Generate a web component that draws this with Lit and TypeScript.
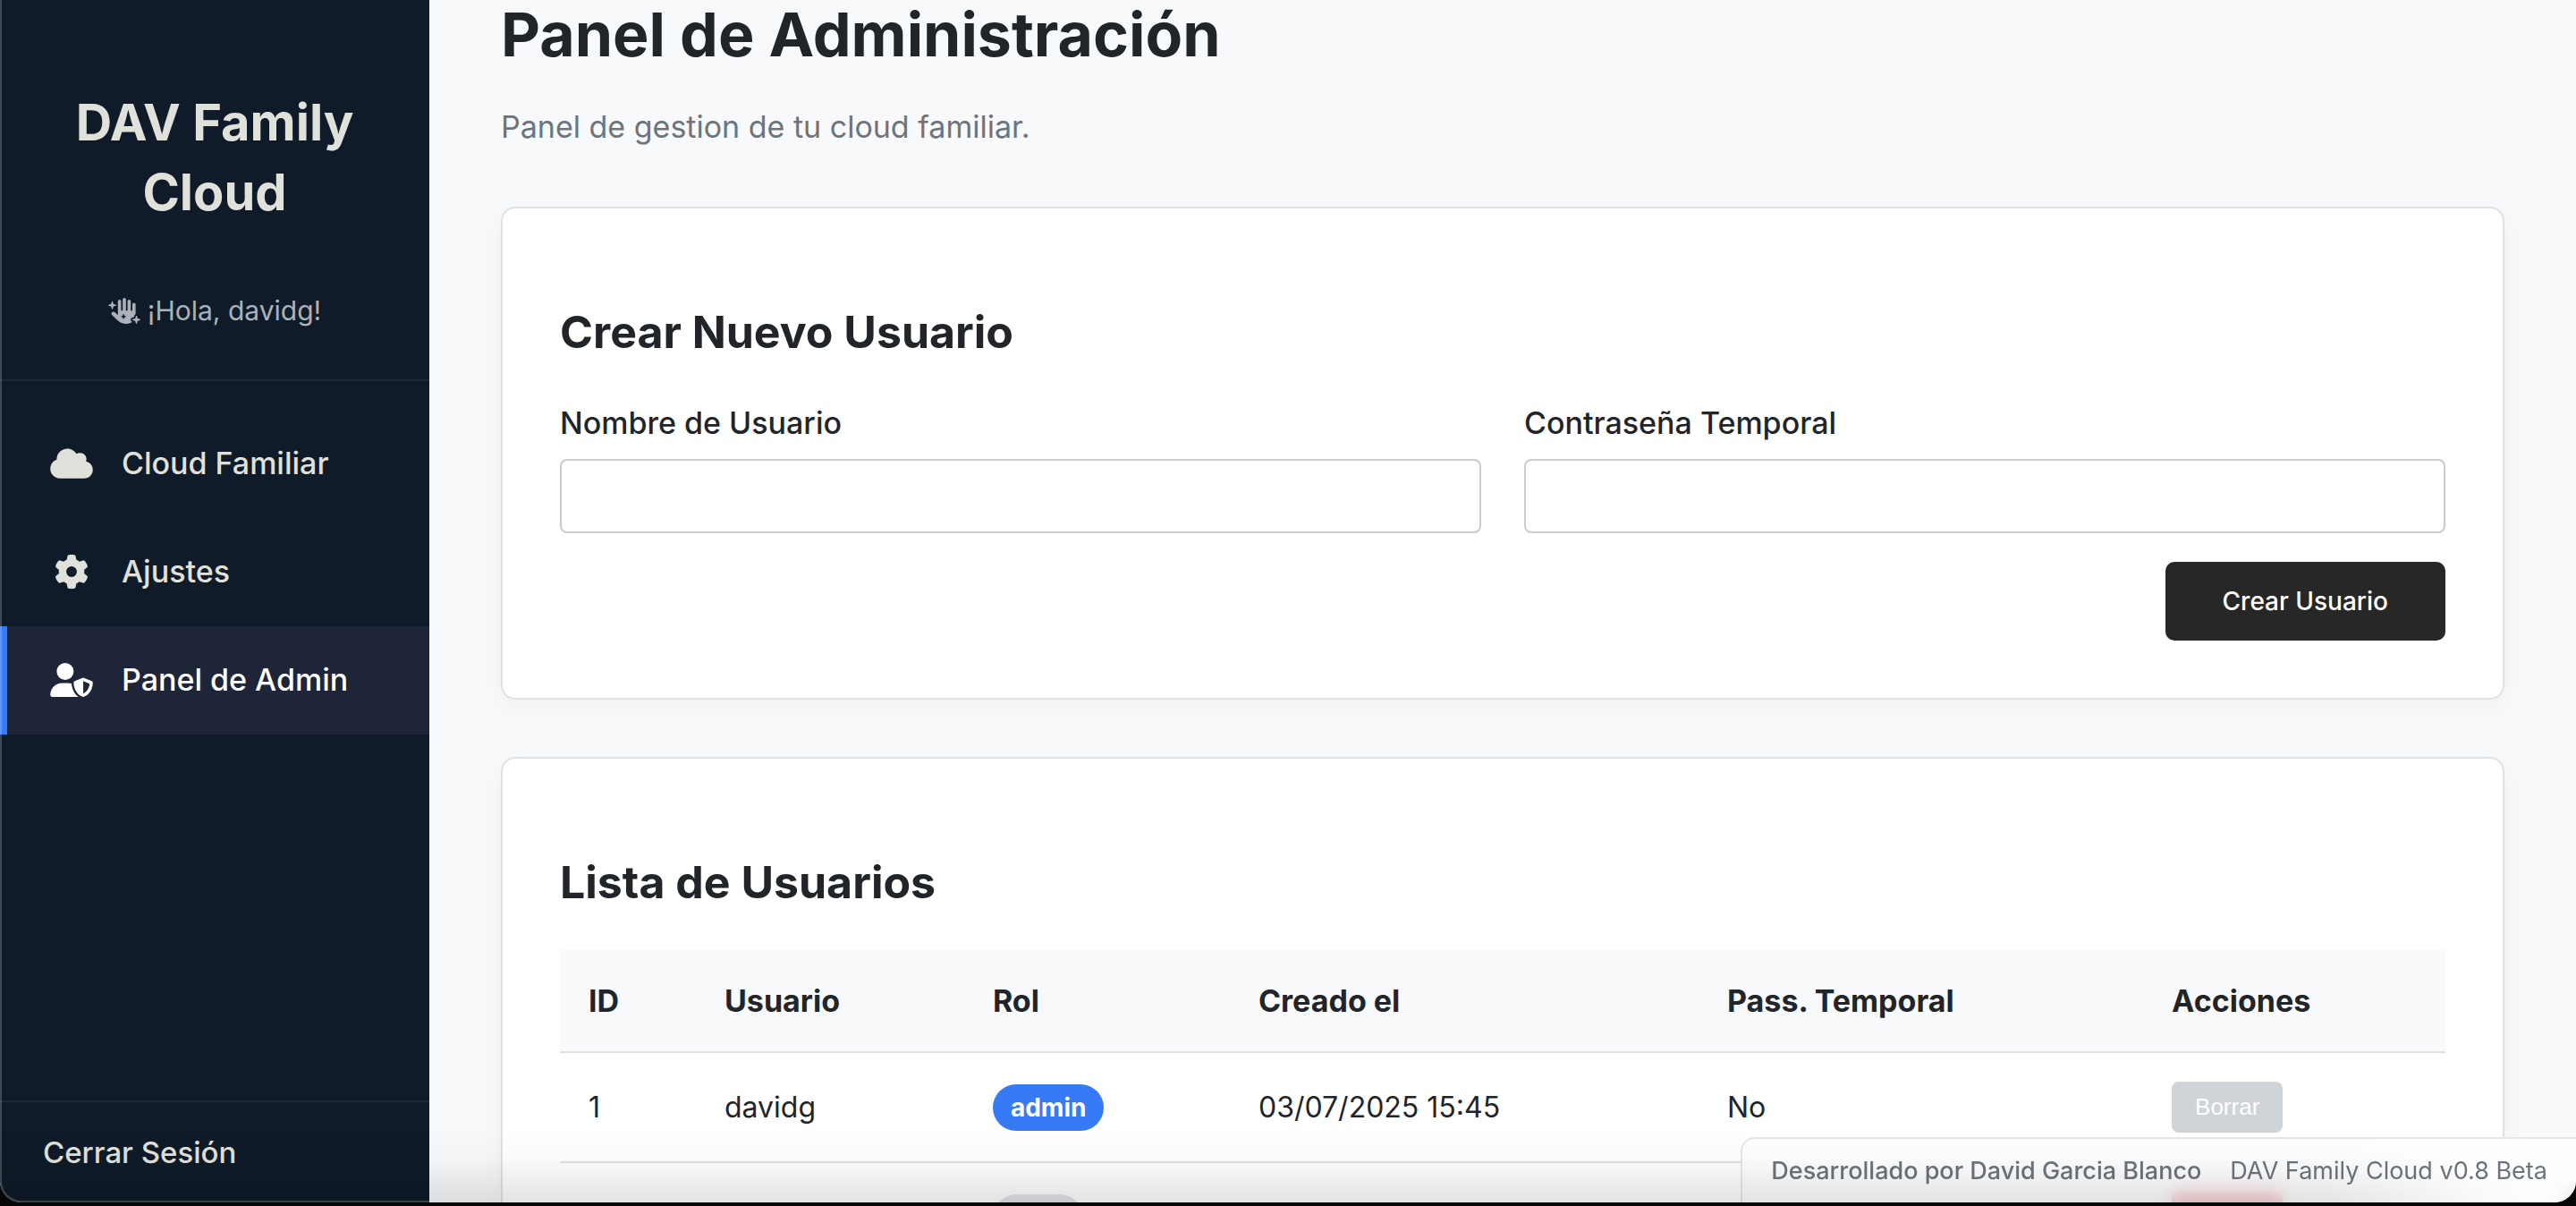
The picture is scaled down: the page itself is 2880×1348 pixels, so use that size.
import { LitElement, html, css, svg } from "lit";
import { customElement, property, state } from "lit/decorators.js";
import { classMap } from "lit/directives/class-map.js";

interface IconShape {
  box: string;
  d: string;
}

const ICONS: Record<string, IconShape> = {
  cloud: {
    box: "0 0 640 512",
    d: "M0 336c0 79.5 64.5 144 144 144H512c70.7 0 128-57.3 128-128c0-61.9-44-113.6-102.4-125.4c4.1-10.7 6.4-22.4 6.4-34.6c0-53-43-96-96-96c-19.7 0-38.1 6-53.3 16.2C367 64.2 315.3 32 256 32C167.6 32 96 103.6 96 192c0 2.7 .1 5.4 .2 8.1C40.2 219.8 0 273.2 0 336z",
  },
  gear: {
    box: "0 0 512 512",
    d: "M495.9 166.6c3.2 8.7 .5 18.4-6.4 24.6l-43.3 39.4c1.1 8.3 1.7 16.8 1.7 25.4s-.6 17.1-1.7 25.4l43.3 39.4c6.9 6.2 9.6 15.9 6.4 24.6c-4.4 11.9-9.7 23.3-15.8 34.3l-4.7 8.1c-6.6 11-14 21.4-22.1 31.2c-5.9 7.2-15.7 9.6-24.5 6.8l-55.7-17.7c-13.4 10.3-28.2 18.9-44 25.4l-12.5 57.1c-2 9.1-9 16.3-18.2 17.8c-13.8 2.3-28 3.5-42.5 3.5s-28.7-1.2-42.5-3.5c-9.2-1.5-16.2-8.7-18.2-17.8l-12.5-57.1c-15.8-6.5-30.6-15.1-44-25.4L83.1 425.9c-8.8 2.8-18.6 .3-24.5-6.8c-8.1-9.8-15.5-20.2-22.1-31.2l-4.7-8.1c-6.1-11-11.4-22.4-15.8-34.3c-3.2-8.7-.5-18.4 6.4-24.6l43.3-39.4C64.6 273.1 64 264.6 64 256s.6-17.1 1.7-25.4L22.4 191.2c-6.9-6.2-9.6-15.9-6.4-24.6c4.4-11.9 9.7-23.3 15.8-34.3l4.7-8.1c6.6-11 14-21.4 22.1-31.2c5.9-7.2 15.7-9.6 24.5-6.8l55.7 17.7c13.4-10.3 28.2-18.9 44-25.4l12.5-57.1c2-9.1 9-16.3 18.2-17.8C227.3 1.2 241.5 0 256 0s28.7 1.2 42.5 3.5c9.2 1.5 16.2 8.7 18.2 17.8l12.5 57.1c15.8 6.5 30.6 15.1 44 25.4l55.7-17.7c8.8-2.8 18.6-.3 24.5 6.8c8.1 9.8 15.5 20.2 22.1 31.2l4.7 8.1c6.1 11 11.4 22.4 15.8 34.3zM256 336a80 80 0 1 0 0-160 80 80 0 1 0 0 160z",
  },
  shield: {
    box: "0 0 640 512",
    d: "M224 256A128 128 0 1 0 224 0a128 128 0 1 0 0 256zm-45.7 48C79.8 304 0 383.8 0 482.3C0 498.7 13.3 512 29.7 512H418.3c1.8 0 3.5-.2 5.3-.5c-76.3-55.1-99.8-141-103.1-200.2c-16.1-4.8-33.1-7.3-50.7-7.3H178.3zm308.8-78.3l-120 48C358 277.4 352 286.2 352 296c0 63.3 25.9 168.8 134.8 214.2c5.9 2.5 12.6 2.5 18.5 0C614.1 464.8 640 359.3 640 296c0-9.8-6-18.6-15.1-22.3l-120-48c-5.7-2.3-12.1-2.3-17.8 0zM591.4 312c-3.9 50.7-27.2 116.7-95.4 149.7V273.8L591.4 312z",
  },
  hand: {
    box: "0 0 640 512",
    d: "M320 0c17.7 0 32 14.3 32 32V240c0 8.8 7.2 16 16 16s16-7.2 16-16V64c0-17.7 14.3-32 32-32s32 14.3 32 32V240c0 8.8 7.2 16 16 16s16-7.2 16-16V128c0-17.7 14.3-32 32-32s32 14.3 32 32V323.1c-11.9 4.8-21.3 14.9-25 27.8l-8.9 31.2L478.9 391C460.6 396.3 448 413 448 432c0 18.9 12.5 35.6 30.6 40.9C448.4 497.4 409.9 512 368 512H348.8c-59.6 0-116.9-22.9-160-64L76.4 341c-16-15.2-16.6-40.6-1.4-56.6s40.6-16.6 56.6-1.4l60.5 57.6c0-1.5-.1-3.1-.1-4.6V64c0-17.7 14.3-32 32-32s32 14.3 32 32V240c0 8.8 7.2 16 16 16s16-7.2 16-16V32c0-17.7 14.3-32 32-32zm-7.3 326.6c-1.1-3.9-4.7-6.6-8.7-6.6s-7.6 2.7-8.7 6.6L288 352l-25.4 7.3c-3.9 1.1-6.6 4.7-6.6 8.7s2.7 7.6 6.6 8.7L288 384l7.3 25.4c1.1 3.9 4.7 6.6 8.7 6.6s7.6-2.7 8.7-6.6L320 384l25.4-7.3c3.9-1.1 6.6-4.7 6.6-8.7s-2.7-7.6-6.6-8.7L320 352l-7.3-25.4zM104 120l48.3 13.8c4.6 1.3 7.7 5.5 7.7 10.2s-3.1 8.9-7.7 10.2L104 168 90.2 216.3c-1.3 4.6-5.5 7.7-10.2 7.7s-8.9-3.1-10.2-7.7L56 168 7.7 154.2C3.1 152.9 0 148.7 0 144s3.1-8.9 7.7-10.2L56 120 69.8 71.7C71.1 67.1 75.3 64 80 64s8.9 3.1 10.2 7.7L104 120zM584 408l48.3 13.8c4.6 1.3 7.7 5.5 7.7 10.2s-3.1 8.9-7.7 10.2L584 456l-13.8 48.3c-1.3 4.6-5.5 7.7-10.2 7.7s-8.9-3.1-10.2-7.7L536 456l-48.3-13.8c-4.6-1.3-7.7-5.5-7.7-10.2s3.1-8.9 7.7-10.2L536 408l13.8-48.3c1.3-4.6 5.5-7.7 10.2-7.7s8.9 3.1 10.2 7.7L584 408z",
  },
};

@customElement("app-icon")
class AppIcon extends LitElement {
  @property() name = "cloud";

  static styles = css`
    :host {
      display: inline-flex;
      flex: none;
    }
    .glyph {
      display: block;
      width: 100%;
      height: 100%;
      fill: currentColor;
    }
  `;

  render() {
    const icon = ICONS[this.name];
    return html`<svg class="glyph" viewBox=${icon.box} aria-hidden="true">
      ${svg`<path d=${icon.d} />`}
    </svg>`;
  }
}

@customElement("side-bar")
class SideBar extends LitElement {
  @state() private current = "admin";

  private links = [
    { id: "cloud", icon: "cloud", label: "Cloud Familiar" },
    { id: "settings", icon: "gear", label: "Ajustes" },
    { id: "admin", icon: "shield", label: "Panel de Admin" },
  ];

  static styles = css`
    :host {
      position: relative;
      display: flex;
      flex-direction: column;
      box-sizing: border-box;
      background: #0f1b28;
      color: #e1e1dc;
    }
    /* thin light rim along the outer edge of the window */
    :host::after {
      content: "";
      position: absolute;
      inset: 0;
      border-left: 2px solid rgba(255, 255, 255, 0.2);
      border-bottom: 2px solid rgba(255, 255, 255, 0.2);
      border-bottom-left-radius: 24px;
      pointer-events: none;
    }
    .head {
      padding: 98px 32px 53px;
      border-bottom: 2px solid #1c2838;
      text-align: center;
    }
    .brand {
      margin: 0 0 69px;
      font-size: 56px;
      line-height: 78px;
      font-weight: 700;
    }
    .hello {
      display: flex;
      align-items: center;
      justify-content: center;
      gap: 8px;
      margin: 0;
      font-size: 30px;
      line-height: 48px;
      color: #abb2b9;
    }
    .hello-icon {
      width: 36px;
      height: 29px;
    }
    .nav {
      flex: 1;
      padding-top: 32px;
    }
    .link {
      display: flex;
      align-items: center;
      gap: 32px;
      padding: 31px 32px 33px 48px;
      border-left: 8px solid transparent;
      font-size: 34px;
      line-height: 57px;
      font-weight: 500;
      color: inherit;
      text-decoration: none;
    }
    .link.active {
      border-left-color: #377af6;
      background: #1e2538;
      color: #fff;
    }
    .link-icon {
      width: 48px;
      height: 38px;
    }
    .foot {
      border-top: 2px solid #1c2838;
    }
    .logout {
      display: block;
      padding: 32px 48px;
      font-size: 33px;
      line-height: 48px;
      font-weight: 500;
      color: inherit;
      text-decoration: none;
    }
  `;

  render() {
    return html`
      <header class="head">
        <h2 class="brand">DAV Family Cloud</h2>
        <p class="hello">
          <app-icon class="hello-icon" name="hand"></app-icon>
          <span>¡Hola, davidg!</span>
        </p>
      </header>
      <nav class="nav">
        ${this.links.map(
          (l) => html`<a
            href="#${l.id}"
            class=${classMap({ link: true, active: l.id === this.current })}
            @click=${() => (this.current = l.id)}
          >
            <app-icon class="link-icon" name=${l.icon}></app-icon>
            <span>${l.label}</span>
          </a>`
        )}
      </nav>
      <div class="foot"><a class="logout" href="#logout">Cerrar Sesión</a></div>
    `;
  }
}

@customElement("create-user-form")
class CreateUserForm extends LitElement {
  static styles = css`
    :host {
      display: block;
    }
    .form {
      display: grid;
      grid-template-columns: 1fr 1fr;
      column-gap: 48px;
      row-gap: 32px;
    }
    .field {
      display: flex;
      flex-direction: column;
      gap: 16px;
    }
    .label {
      font-size: 34px;
      line-height: 49px;
      font-weight: 500;
    }
    .input {
      box-sizing: border-box;
      width: 100%;
      height: 83px;
      padding: 0 24px;
      border: 2px solid #ccc;
      border-radius: 8px;
      background: #fff;
      font: inherit;
      font-size: 32px;
      color: inherit;
    }
    .submit {
      grid-column: 1 / -1;
      justify-self: end;
      height: 88px;
      padding: 0 64px;
      border: 0;
      border-radius: 10px;
      background: #272727;
      color: #fff;
      font: inherit;
      font-size: 28px;
      font-weight: 500;
    }
  `;

  render() {
    return html`<form class="form" @submit=${(e: Event) => e.preventDefault()}>
      <div class="field">
        <label class="label" for="username">Nombre de Usuario</label>
        <input class="input" id="username" type="text" autocomplete="off" />
      </div>
      <div class="field">
        <label class="label" for="password">Contraseña Temporal</label>
        <input class="input" id="password" type="password" autocomplete="new-password" />
      </div>
      <button class="submit" type="submit">Crear Usuario</button>
    </form>`;
  }
}

interface User {
  id: number;
  name: string;
  role: "admin" | "user";
  created: string;
  temporary: string;
}

@customElement("user-table")
class UserTable extends LitElement {
  private users: User[] = [
    { id: 1, name: "davidg", role: "admin", created: "03/07/2025 15:45", temporary: "No" },
    { id: 2, name: "", role: "user", created: "03/07/2025", temporary: "" },
  ];

  static styles = css`
    :host {
      display: block;
    }
    .table {
      width: 100%;
      table-layout: fixed;
      border-collapse: separate;
      border-spacing: 0;
    }
    .c-id { width: 7.21%; }
    .c-user { width: 14.23%; }
    .c-role { width: 14.09%; }
    .c-date { width: 24.86%; }
    .c-pass { width: 23.58%; }
    .th,
    .td {
      padding: 32px;
      border-bottom: 2px solid #dee2e6;
      text-align: left;
      vertical-align: middle;
      line-height: 48px;
    }
    .th {
      background: #f8f9fb;
      font-size: 34px;
      font-weight: 700;
    }
    .td {
      height: 57px;
      font-size: 32px;
    }
    .badge {
      display: inline-block;
      padding: 0 20px;
      border-radius: 26px;
      background: #e2e4e8;
      font-size: 28px;
      line-height: 52px;
      font-weight: 700;
      vertical-align: middle;
    }
    .badge.admin {
      background: #377af6;
      color: #fff;
    }
    .delete {
      display: block;
      height: 57px;
      padding: 0 26px;
      border: 0;
      border-radius: 8px;
      background: #dc3545;
      color: #fff;
      font: 26px "Liberation Sans", Arial, sans-serif;
    }
    .delete:disabled {
      background: #cfd4d8;
    }
  `;

  render() {
    const heads = ["ID", "Usuario", "Rol", "Creado el", "Pass. Temporal", "Acciones"];
    return html`<table class="table">
      <colgroup>
        <col class="c-id" />
        <col class="c-user" />
        <col class="c-role" />
        <col class="c-date" />
        <col class="c-pass" />
        <col />
      </colgroup>
      <thead>
        <tr>${heads.map((h) => html`<th class="th" scope="col">${h}</th>`)}</tr>
      </thead>
      <tbody>
        ${this.users.map(
          (u) => html`<tr>
            <td class="td">${u.id}</td>
            <td class="td">${u.name}</td>
            <td class="td">
              <span class=${classMap({ badge: true, admin: u.role === "admin" })}>${u.role}</span>
            </td>
            <td class="td">${u.created}</td>
            <td class="td">${u.temporary}</td>
            <td class="td">
              <button class="delete" type="button" ?disabled=${u.role === "admin"}>Borrar</button>
            </td>
          </tr>`
        )}
      </tbody>
    </table>`;
  }
}

@customElement("app-root")
class AppRoot extends LitElement {
  static styles = css`
    :host {
      display: flex;
      box-sizing: border-box;
      height: 100vh;
      padding-bottom: 4px;
      background: #040608;
      font-family: Inter, "Open Sans", sans-serif;
      color: #212529;
    }
    .window {
      position: relative;
      flex: 1;
      display: grid;
      grid-template-columns: 480px 1fr;
      grid-template-rows: 100%;
      overflow: hidden;
      border-radius: 0 0 24px 24px;
      background: #f8f9fb;
    }
    /* soft shade rising from the lower edge, clearing toward the right corner */
    .window::after {
      content: "";
      position: absolute;
      inset: auto 0 0 0;
      height: 84px;
      background: linear-gradient(
        to bottom,
        rgba(0, 0, 0, 0),
        rgba(0, 0, 0, 0.02) 42%,
        rgba(0, 0, 0, 0.11)
      );
      mask-image: linear-gradient(to right, #000 calc(100% - 280px), transparent calc(100% - 60px));
      pointer-events: none;
    }
    .main {
      display: flex;
      flex-direction: column;
      gap: 64px;
      padding: 0 80px;
      overflow: hidden;
    }
    .intro {
      display: flex;
      flex-direction: column;
      gap: 40px;
    }
    .title {
      margin: 0;
      font-size: 68px;
      line-height: 76px;
      font-weight: 700;
    }
    .lead {
      margin: 0;
      font-size: 34px;
      line-height: 51px;
      color: #6c757d;
    }
    .card {
      flex: none;
      padding: 64px;
      border: 2px solid #dee2e6;
      border-radius: 16px;
      background: #fff;
      box-shadow: 0 8px 24px rgba(0, 0, 0, 0.04);
    }
    .heading {
      margin: 38px 0 40px;
      font-size: 50px;
      line-height: 73px;
      font-weight: 700;
    }
    .credits {
      position: absolute;
      right: 0;
      bottom: 0;
      display: flex;
      gap: 32px;
      padding: 12px 32px;
      border-top: 2px solid #e5e7eb;
      border-left: 2px solid #e5e7eb;
      border-top-left-radius: 16px;
      background: rgba(255, 255, 255, 0.75);
      backdrop-filter: blur(10px);
      font-size: 27px;
      line-height: 47px;
      color: #6c757d;
    }
    .author {
      font-weight: 500;
    }
  `;

  render() {
    return html`<div class="window">
      <side-bar></side-bar>
      <main class="main">
        <div class="intro">
          <h1 class="title">Panel de Administración</h1>
          <p class="lead">Panel de gestion de tu cloud familiar.</p>
        </div>
        <section class="card">
          <h2 class="heading">Crear Nuevo Usuario</h2>
          <create-user-form></create-user-form>
        </section>
        <section class="card">
          <h2 class="heading">Lista de Usuarios</h2>
          <user-table></user-table>
        </section>
      </main>
      <footer class="credits">
        <span class="author">Desarrollado por David Garcia Blanco</span>
        <span>DAV Family Cloud v0.8 Beta</span>
      </footer>
    </div>`;
  }
}
